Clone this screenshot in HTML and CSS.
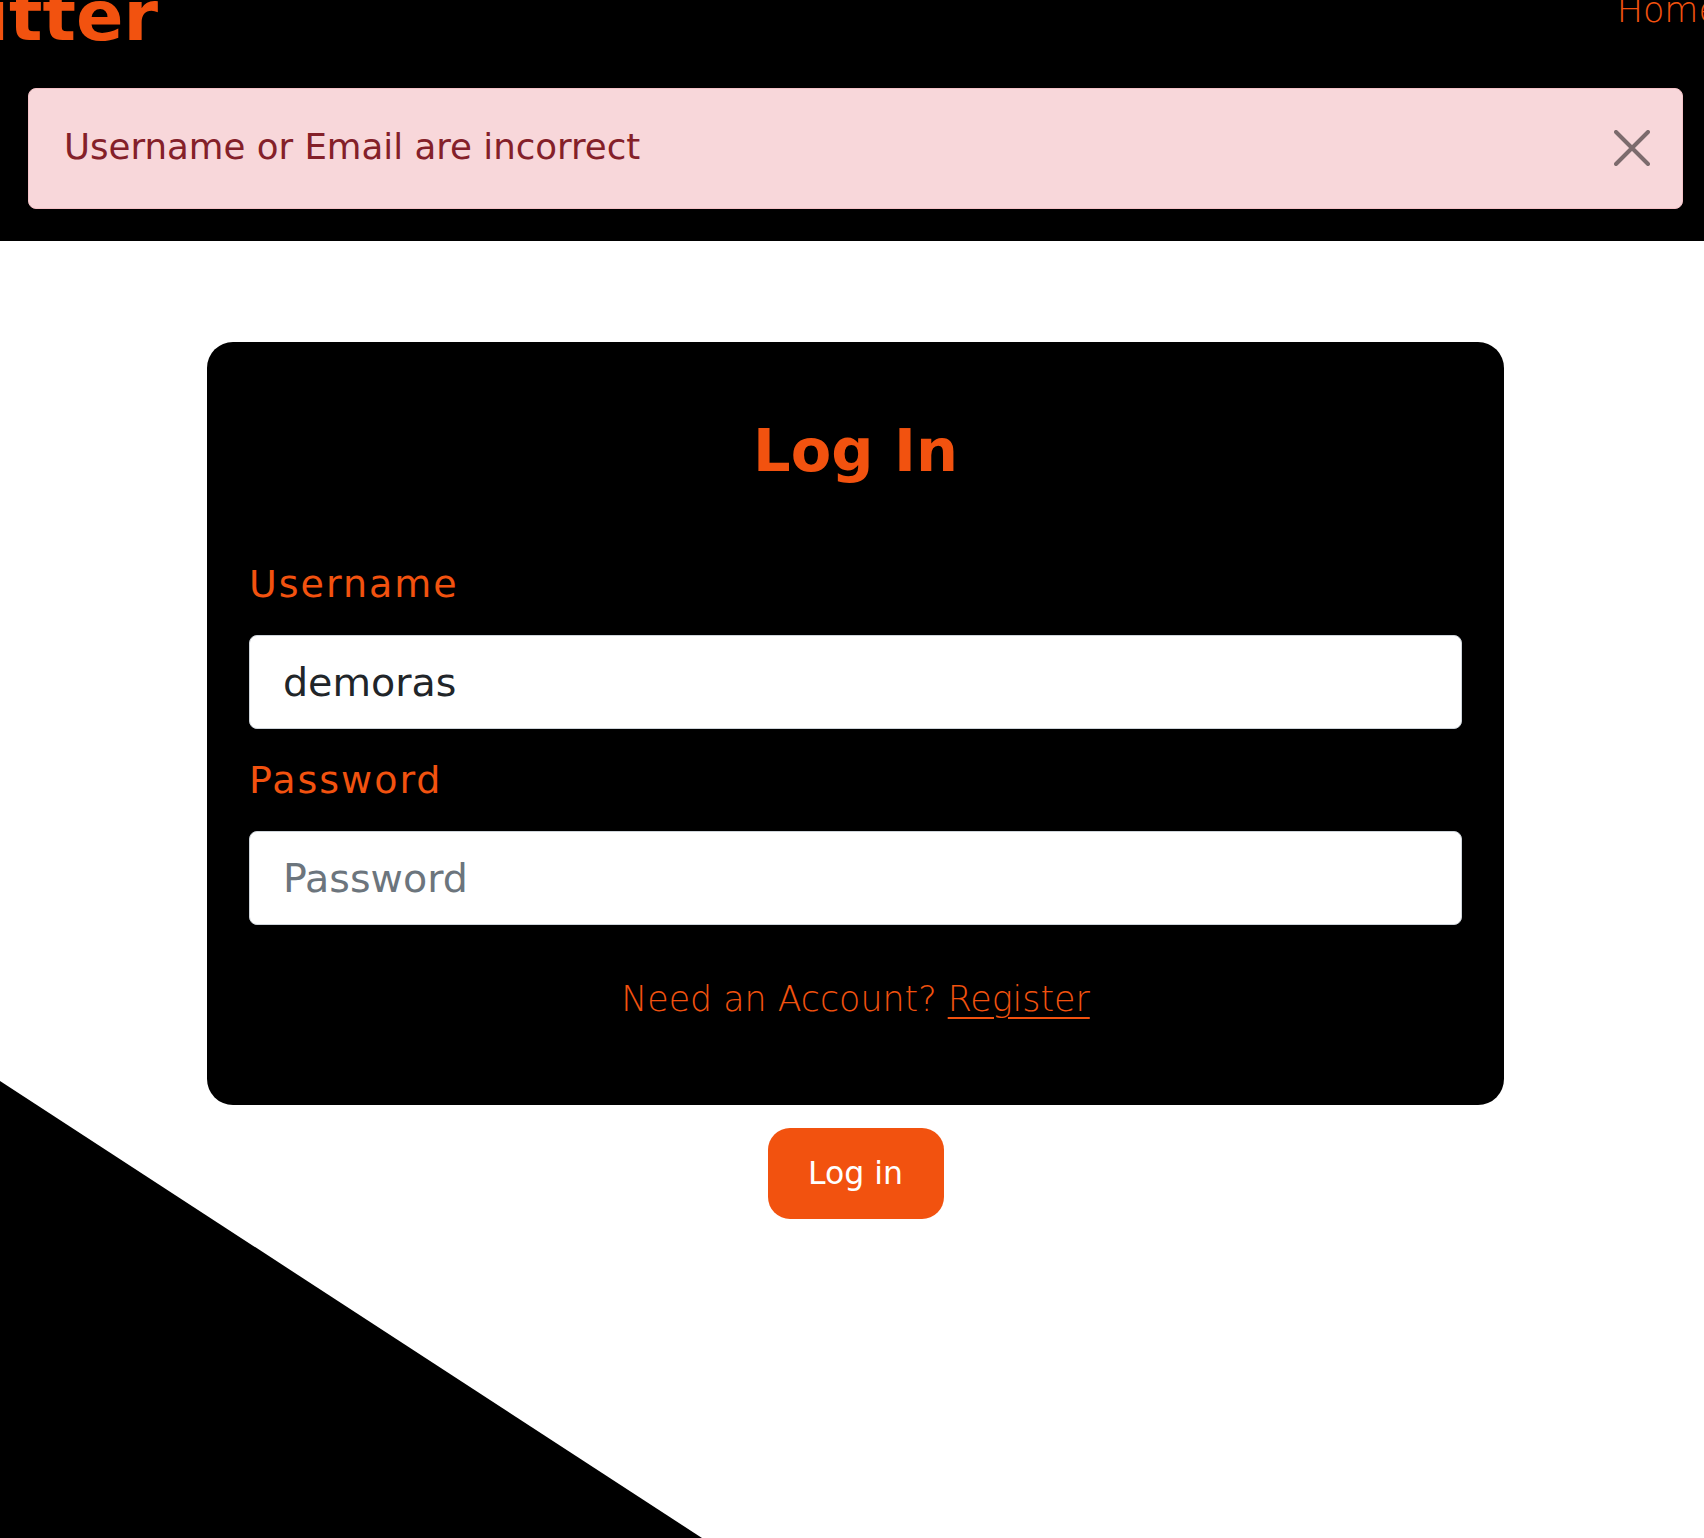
FILE: index.html
```html
<!DOCTYPE html>
<html lang="en">
<head>
<meta charset="utf-8">
<title>Log In</title>
<link rel="stylesheet" href="styles.css">
</head>
<body>
<div class="decor" aria-hidden="true"></div>
<header class="top">
  <nav class="nav">
    <a class="brand" href="#">itter</a>
    <a class="nav-link" href="#">Home</a>
  </nav>
  <div class="alert" role="alert">
    <span class="alert-text">Username or Email are incorrect</span>
    <button class="btn-close" type="button" aria-label="Close">
      <svg width="36" height="36" viewBox="0 0 36 36"><path d="M2 2 L34 34 M34 2 L2 34" stroke="#000" stroke-opacity="0.5" stroke-width="4" stroke-linecap="round"/></svg>
    </button>
  </div>
</header>
<main class="main">
  <form class="card">
    <h1 class="title">Log In</h1>
    <label class="label" for="u">Username</label>
    <input class="field" id="u" type="text" value="demoras">
    <label class="label label-pw" for="p">Password</label>
    <input class="field" id="p" type="password" placeholder="Password">
    <p class="register">Need an Account? <a href="#">Register</a></p>
  </form>
  <div class="actions">
    <button class="btn" type="button">Log in</button>
  </div>
</main>
</body>
</html>
```

FILE: styles.css
```css
html, body {
  margin: 0;
  padding: 0;
  overflow: hidden;
}
body {
  position: relative;
  min-height: 1538px;
  background: #fff;
  font-family: "DejaVu Sans", "Liberation Sans", sans-serif;
  color: #212529;
}
.decor {
  position: absolute;
  left: 0;
  top: 1081px;
  width: 702px;
  height: 457px;
  background: #000;
  clip-path: polygon(0 0, 100% 100%, 0 100%);
  z-index: 0;
}
.top {
  position: relative;
  z-index: 1;
  background: #000;
  height: 241px;
  box-sizing: border-box;
  padding: 0 21px 0 28px;
}
.nav {
  display: flex;
  justify-content: space-between;
  align-items: flex-start;
  height: 88px;
}
.brand {
  font-weight: bold;
  font-size: 70px;
  line-height: 1;
  margin-top: -19px;
  margin-left: -43px;
  color: #f2520f;
  text-decoration: none;
}
.nav-link {
  font-size: 35px;
  font-weight: 300;
  line-height: 1;
  margin-top: -7px;
  margin-right: -37px;
  color: #f2520f;
  text-decoration: none;
}
.alert {
  position: relative;
  background: #f8d7da;
  border: 1px solid #f5c2c7;
  border-radius: 8px;
  color: #842029;
  font-size: 35.6px;
  line-height: 1.5;
  padding: 31px 35px 35px 35px;
}
.btn-close {
  position: absolute;
  top: 41px;
  right: 32px;
  width: 36px;
  height: 36px;
  padding: 0;
  border: 0;
  background: transparent;
  display: flex;
}
.main {
  position: relative;
  z-index: 1;
  padding: 101px 0 0 207px;
  width: 1297px;
}
.card {
  display: flex;
  flex-direction: column;
  background: #000;
  border-radius: 26px;
  padding: 42px;
  margin: 0;
}
.title {
  margin: 32px 0 69px;
  text-align: center;
  font-size: 59px;
  line-height: 1.2;
  font-weight: bold;
  color: #f2520f;
}
.label {
  font-size: 38px;
  line-height: 1.5;
  letter-spacing: 2px;
  color: #f2520f;
  margin-bottom: 22px;
}
.label-pw {
  margin-top: 23px;
}
.field {
  box-sizing: border-box;
  height: 94px;
  width: 100%;
  margin: 0;
  padding: 0 33px;
  border: 1px solid #ced4da;
  border-radius: 8px;
  background: #fff;
  font-family: "DejaVu Sans", "Liberation Sans", sans-serif;
  font-size: 39.6px;
  color: #212529;
  outline: none;
}
.field::placeholder {
  color: #6c757d;
  opacity: 1;
}
.register {
  margin: 48px 0 38px;
  text-align: center;
  font-size: 34.8px;
  line-height: 1.5;
  font-weight: 300;
  color: #f2520f;
}
.register a {
  color: #f2520f;
  text-decoration: underline;
  text-underline-offset: 6px;
  text-decoration-thickness: 2px;
}
.actions {
  display: flex;
  justify-content: center;
  margin-top: 23px;
}
.btn {
  width: 176px;
  height: 91px;
  border: 0;
  border-radius: 22px;
  background: #f2520f;
  color: #fff;
  font-family: "DejaVu Sans", "Liberation Sans", sans-serif;
  font-size: 31.5px;
  padding: 0;
}
```
